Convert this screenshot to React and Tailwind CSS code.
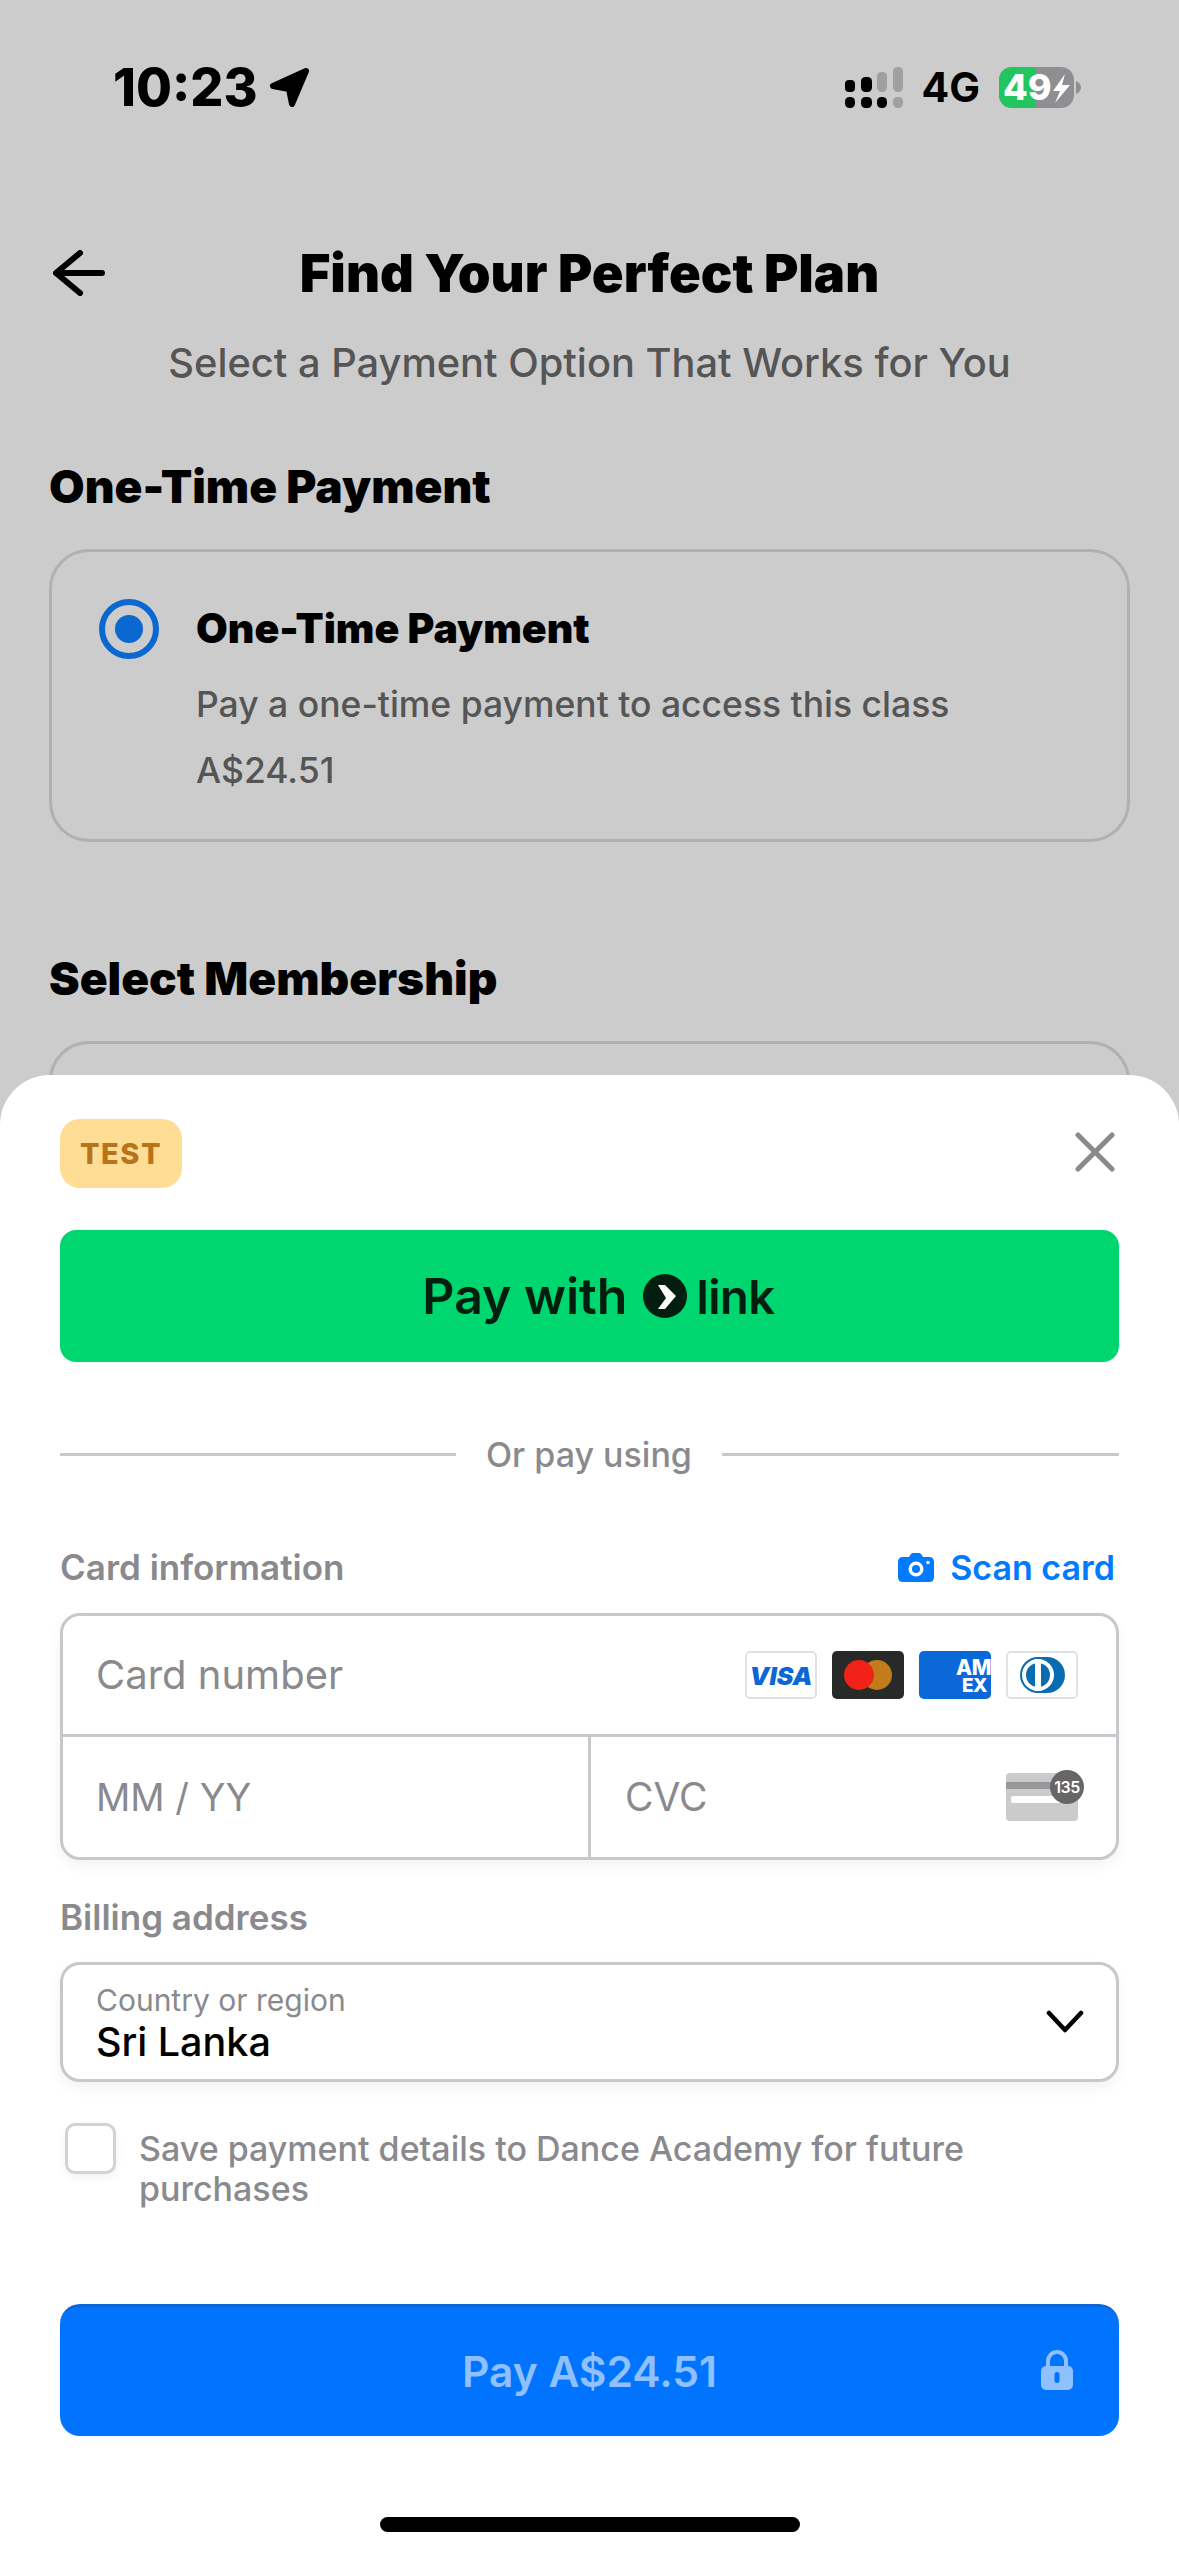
function Signal() {
  return (
    <svg width="58" height="41" viewBox="0 0 58 41">
      <rect x="0" y="13" width="10" height="12" rx="4" fill="#000" />
      <rect x="16" y="10" width="11" height="15" rx="4.5" fill="#000" />
      <rect x="32" y="5" width="10" height="20" rx="4.5" fill="#a0a0a0" />
      <rect x="48" y="0" width="10" height="25" rx="4.5" fill="#a0a0a0" />
      <rect x="0" y="30" width="10" height="11" rx="4.5" fill="#000" />
      <rect x="16" y="30" width="11" height="11" rx="4.5" fill="#000" />
      <rect x="32" y="30" width="10" height="11" rx="4.5" fill="#000" />
      <rect x="48" y="30" width="10" height="11" rx="4.5" fill="#a0a0a0" />
    </svg>
  );
}

function Battery() {
  return (
    <svg width="82" height="41" viewBox="0 0 82 41" className="overflow-visible">
      <rect x="0" y="0" width="75" height="41" rx="13" fill="#8e8e93" />
      <path d="M13 0 H37 V41 H13 A13 13 0 0 1 0 28 V13 A13 13 0 0 1 13 0 Z" fill="#22c55e" />
      <path d="M77 14 C80 15 82 18 82 20.5 C82 23 80 26 77 27 Z" fill="#8e8e93" />
      <text x="4" y="33" fontFamily="Inter" fontWeight="800" fontSize="36" fill="#fff">49</text>
      <path d="M66 7 L54 24 H61 L56 36 L71 18 H63 Z" fill="#fff" />
    </svg>
  );
}

function Visa() {
  return (
    <svg width="72" height="48" viewBox="0 0 72 48">
      <rect x="1" y="1" width="70" height="46" rx="4" fill="#fff" stroke="#d8d8dc" strokeWidth="1.5" />
      <text x="36" y="34" textAnchor="middle" fontFamily="Inter" fontStyle="italic" fontWeight="900" fontSize="25" fill="#0b67d6">VISA</text>
    </svg>
  );
}

function MasterCard() {
  return (
    <svg width="72" height="48" viewBox="0 0 72 48">
      <rect width="72" height="48" rx="5" fill="#272a27" />
      <circle cx="45" cy="24" r="15" fill="#c27c1c" />
      <circle cx="27" cy="24" r="15" fill="#f1221a" />
    </svg>
  );
}

function Amex() {
  return (
    <svg width="72" height="48" viewBox="0 0 72 48">
      <rect width="72" height="48" rx="5" fill="#0b68d9" />
      <text x="37" y="24" fontFamily="Inter" fontWeight="800" fontSize="21" letterSpacing="-0.5" fill="#fff">AM</text>
      <text x="43" y="41" fontFamily="Inter" fontWeight="800" fontSize="19" letterSpacing="-0.5" fill="#fff">EX</text>
    </svg>
  );
}

function Diners() {
  return (
    <svg width="72" height="48" viewBox="0 0 72 48">
      <rect x="1" y="1" width="70" height="46" rx="4" fill="#fff" stroke="#d8d8dc" strokeWidth="1.5" />
      <rect x="14" y="6" width="45" height="36" rx="18" fill="#0a6cb0" />
      <circle cx="32" cy="24" r="16" fill="#fff" />
      <circle cx="32" cy="24" r="12" fill="#0a6cb0" />
      <rect x="29" y="8" width="6" height="32" fill="#fff" />
    </svg>
  );
}

function CvcCard() {
  return (
    <svg width="72" height="48" viewBox="0 0 72 48" className="overflow-visible">
      <rect width="72" height="48" rx="4" fill="#cbcbcb" />
      <rect y="9" width="72" height="7" fill="#98989a" />
      <rect x="5" y="23" width="62" height="7" rx="2" fill="#fff" />
      <circle cx="61" cy="14" r="17" fill="#666666" />
      <text x="61" y="20" textAnchor="middle" fontFamily="Inter" fontWeight="600" fontSize="16" letterSpacing="-0.5" fill="#fff">135</text>
    </svg>
  );
}

function CameraIcon() {
  return (
    <svg width="36" height="29" viewBox="0 0 36 29">
      <path d="M5 4 H11 L13 1 Q13.5 0 15 0 H21 Q22.5 0 23 1 L25 4 H31 Q36 4 36 9 V24 Q36 29 31 29 H5 Q0 29 0 24 V9 Q0 4 5 4 Z" fill="#007aff" />
      <circle cx="18" cy="16" r="7.5" fill="#fff" />
      <circle cx="18" cy="16" r="4" fill="#007aff" />
      <circle cx="30" cy="9.5" r="1.8" fill="#fff" />
    </svg>
  );
}

function LockIcon() {
  return (
    <svg width="32" height="40" viewBox="0 0 32 40" fill="none">
      <path d="M7 17 V11 A9 9 0 0 1 25 11 V17" stroke="#8fc0ff" strokeWidth="4" />
      <rect x="0" y="16" width="32" height="24" rx="5" fill="#8fc0ff" />
      <rect x="13.5" y="22" width="5" height="11" rx="2.5" fill="#0074ff" />
    </svg>
  );
}

export default function App() {
  return (
    <div className="relative w-[1179px] h-[2556px] overflow-hidden bg-[#cccccc] font-['Inter',sans-serif]">
      {/* status bar */}
      <div className="flex items-center justify-between h-[41px] mt-[67px] pl-[113px] pr-[98px]">
        <div className="flex items-center gap-[11px]">
          <span className="text-[52px] leading-none font-extrabold text-black">10:23</span>
          <svg width="41" height="41" viewBox="0 0 41 41">
            <path d="M37 4 L4 19 L20 22 L23 37 Z" fill="#000" stroke="#000" strokeWidth="6" strokeLinejoin="round" />
          </svg>
        </div>
        <div className="flex items-center">
          <Signal />
          <span className="ml-[19px] mr-[19px] text-[41px] leading-none font-bold text-black">4G</span>
          <Battery />
        </div>
      </div>

      {/* page behind the sheet */}
      <div className="px-[49px]">
        <div className="grid grid-cols-[1fr_auto_1fr] items-center mt-[139px] h-[48px]">
          <svg width="52" height="46" viewBox="0 0 52 46" fill="none" className="ml-[4px]">
            <path d="M27 3 L3 23 L27 43 M4 23 H49" stroke="#000" strokeWidth="6" strokeLinecap="round" strokeLinejoin="round" />
          </svg>
          <div className="text-[52.5px] leading-none font-black text-black">Find Your Perfect Plan</div>
          <div />
        </div>
        <div className="mt-[45px] text-center text-[39.8px] leading-[46px] font-medium text-[#555555]">Select a Payment Option That Works for You</div>
        <div className="mt-[74px] text-[46px] leading-[52px] font-black text-black">One-Time Payment</div>
        <div className="mt-[37px] h-[293px] w-[1081px] rounded-[40px] border-[3px] border-[#b0b0b0] pl-[47px] pt-[47px] flex gap-[37px]">
          <div className="flex size-[60px] items-center justify-center rounded-full border-[6px] border-[#0b68d0]">
            <div className="size-[28px] rounded-full bg-[#0b68d0]" />
          </div>
          <div>
            <div className="h-[60px] flex items-center text-[41px] font-black text-black">One-Time Payment</div>
            <div className="mt-[24px] text-[35.5px] leading-[44px] font-medium text-[#555555]">Pay a one-time payment to access this class</div>
            <div className="mt-[22px] text-[35.5px] leading-[44px] font-medium text-[#555555]">A$24.51</div>
          </div>
        </div>
        <div className="mt-[110px] text-[46px] leading-[52px] font-black text-black">Select Membership</div>
        <div className="mt-[37px] h-[200px] w-[1081px] rounded-[40px] border-[3px] border-[#b0b0b0]" />
      </div>

      {/* bottom sheet */}
      <div className="absolute left-0 right-0 bottom-0 h-[1481px] rounded-t-[50px] bg-white px-[60px] pt-[44px]">
        <div className="flex items-center justify-between h-[69px]">
          <div className="flex h-[69px] w-[122px] items-center justify-center rounded-[20px] bg-[#ffdd94] text-[29px] font-extrabold tracking-[1.5px] text-[#b8741a]">TEST</div>
          <svg width="40" height="40" viewBox="0 0 40 40" fill="none" className="mr-[4px] -mt-[3px]">
            <path d="M3 3 L37 37 M37 3 L3 37" stroke="#8a8a8e" strokeWidth="5" strokeLinecap="round" />
          </svg>
        </div>

        <div className="mt-[42px] flex h-[132px] w-[1059px] items-center justify-center rounded-[16px] bg-[#00d66f] pl-[18px] text-[#011e0f]">
          <span className="text-[50px] font-semibold leading-none">Pay with</span>
          <svg width="44" height="44" viewBox="0 0 44 44" className="ml-[15px] mr-[10px]">
            <circle cx="22" cy="22" r="22" fill="#011e0f" />
            <path d="M15 11 H22 L33 22 L22 35 H15 L23 24 Z" fill="#fff" />
          </svg>
          <span className="text-[47px] font-semibold leading-none tracking-[-0.5px]">link</span>
        </div>

        <div className="mt-[72px] flex h-[40px] items-center justify-between">
          <div className="h-[3px] w-[396px] bg-[#c7c7cc]" />
          <span className="text-[34px] font-medium text-[#8a8a8e]">Or pay using</span>
          <div className="h-[3px] w-[397px] bg-[#c7c7cc]" />
        </div>

        <div className="mt-[73px] flex h-[40px] w-[1058px] items-center justify-between pr-[3px]">
          <span className="text-[35px] font-semibold text-[#8a8a8e]">Card information</span>
          <div className="flex items-center gap-[16px] text-[#007aff]">
            <CameraIcon />
            <span className="text-[34px] font-semibold">Scan card</span>
          </div>
        </div>

        <div className="mt-[26px] w-[1059px] overflow-hidden rounded-[20px] border-[3px] border-[#c7c7cc] shadow-[0_6px_14px_rgba(0,0,0,0.05)]">
          <div className="flex h-[121px] items-center justify-between border-b-[3px] border-[#c7c7cc] pl-[33px] pr-[38px]">
            <span className="text-[40px] text-[#8a8a8e]">Card number</span>
            <div className="flex gap-[15px]">
              <Visa />
              <MasterCard />
              <Amex />
              <Diners />
            </div>
          </div>
          <div className="flex h-[120px]">
            <div className="flex w-[528px] items-center border-r-[3px] border-[#c7c7cc] pl-[33px] text-[38px] text-[#8a8a8e]">MM / YY</div>
            <div className="flex flex-1 items-center justify-between pl-[34px] pr-[38px]">
              <span className="text-[39px] text-[#8a8a8e]">CVC</span>
              <CvcCard />
            </div>
          </div>
        </div>

        <div className="mt-[37px] h-[40px] flex items-center text-[35px] font-semibold text-[#8a8a8e]">Billing address</div>

        <div className="mt-[25px] flex h-[120px] w-[1059px] items-center justify-between rounded-[20px] border-[3px] border-[#c7c7cc] pl-[33px] pr-[32px] shadow-[0_6px_14px_rgba(0,0,0,0.05)]">
          <div className="pt-[3px]">
            <div className="text-[30px] leading-[36px] text-[#8a8a8e]">Country or region</div>
            <div className="text-[39.5px] leading-[48px] font-medium text-black">Sri Lanka</div>
          </div>
          <svg width="38" height="24" viewBox="0 0 38 24" fill="none">
            <path d="M3 3 L19 20 L35 3" stroke="#000" strokeWidth="4.5" strokeLinecap="round" strokeLinejoin="round" />
          </svg>
        </div>

        <div className="mt-[41px] flex pl-[5px]">
          <div className="size-[51px] shrink-0 rounded-[10px] border-[3px] border-[#d1d1d6] shadow-[0_3px_8px_rgba(0,0,0,0.06)]" />
          <div className="ml-[23px] mt-[6px] w-[900px] text-[34px] leading-[40px] font-medium text-[#8a8a8e]">Save payment details to Dance Academy for future purchases</div>
        </div>

        <div className="relative mt-[95px] flex h-[132px] w-[1059px] items-center justify-center rounded-[20px] border-t-[3px] border-[#0a66d8] bg-[#0074ff]">
          <span className="text-[42.5px] font-semibold text-[#8fc0ff]">Pay A$24.51</span>
          <div className="absolute right-[46px] top-[43px]">
            <LockIcon />
          </div>
        </div>
      </div>

      {/* home indicator */}
      <div className="absolute bottom-[24px] left-[380px] h-[15px] w-[420px] rounded-full bg-black" />
    </div>
  );
}
